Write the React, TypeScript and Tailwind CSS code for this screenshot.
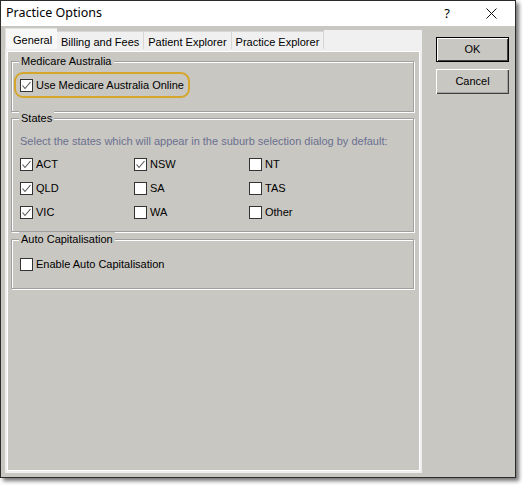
import { ReactNode } from 'react';

const font = { fontFamily: '"Liberation Sans", Arial, sans-serif' };

const Check = ({ checked, label }: { checked?: boolean; label?: string }) => (
  <div className="flex items-center h-[13px]">
    <span className="w-[13px] h-[13px] border border-[#333] bg-white flex items-center justify-center shrink-0">
      {checked && (
        <svg width="11" height="11" viewBox="0 0 11 11">
          <path d="M1.5 5.5 L4 8.5 L9.5 2" fill="none" stroke="#555" strokeWidth="1.1" />
        </svg>
      )}
    </span>
    {label && <span className="ml-[3px] text-[11px] text-black leading-none">{label}</span>}
  </div>
);

const Group = ({ title, className, children }: { title: string; className: string; children: ReactNode }) => (
  <div
    className={`relative border border-[#a0a0a0] shadow-[inset_1px_1px_0_#fff,1px_1px_0_#fff] ${className}`}
  >
    <span className="absolute left-[7px] -top-[8px] px-[2px] bg-[#c9c7c2] text-[11px] leading-[14px] text-black">
      {title}
    </span>
    {children}
  </div>
);

const tabs = ['Billing and Fees', 'Patient Explorer', 'Practice Explorer'];

const states: [string, boolean][] = [
  ['ACT', true],
  ['NSW', true],
  ['NT', false],
  ['QLD', true],
  ['SA', false],
  ['TAS', false],
  ['VIC', true],
  ['WA', false],
  ['Other', false],
];

export default function App() {
  return (
    <div className="w-[523px] h-[486px] bg-white" style={font}>
      <div className="w-[516px] h-[478px] border border-[#2b2b2b] shadow-[3px_3px_4px_rgba(0,0,0,0.55)] flex flex-col">
        {/* title bar */}
        <div className="h-[25px] bg-white flex items-center shrink-0">
          <span
            className="pl-[5px] text-[12.5px] text-black"
            style={{ fontFamily: '"Noto Sans", "Open Sans", sans-serif' }}
          >
            Practice Options
          </span>
          <span
            className="ml-auto text-[13px] text-black mr-[36px]"
            style={{ fontFamily: '"Noto Sans", sans-serif' }}
          >
            ?
          </span>
          <svg width="11" height="11" viewBox="0 0 11 11" className="mr-[18px]">
            <path d="M0.5 0.5 L10.5 10.5 M10.5 0.5 L0.5 10.5" stroke="#111" strokeWidth="1" />
          </svg>
        </div>

        {/* body */}
        <div className="flex-1 bg-[#c9c7c2] flex">
          <div className="ml-[4px] mt-[2px] w-[417px] h-[445px] flex flex-col">
            <div className="flex items-end h-[21px] text-[11px] text-black">
              <div className="h-[21px] w-[52px] bg-[#f7f7f7] border-t border-l border-[#e2e2e2] pl-[7px] pt-[3px]">
                General
              </div>
              {tabs.map((t) => (
                <div
                  key={t}
                  className="h-[18px] bg-[#f0f0f0] border-t border-r border-[#d6d6d6] px-[4px] pt-[2px] whitespace-nowrap"
                >
                  {t}
                </div>
              ))}
              <div className="flex-1 h-[19px] bg-[#f0f0f0]" />
            </div>

            <div className="flex-1 border-2 border-[#efefef] bg-[#f0f0f0]">
              <div className="h-full border border-white bg-[#c9c7c2] pl-[3px] pr-[5px] pt-[9px]">
                <Group title="Medicare Australia" className="h-[51px]">
                  <div className="pt-[10px] pl-[2px]">
                    <div className="inline-flex items-center h-[26px] border-2 border-[#d6a62a] rounded-[9px] pl-[4px] pr-[4px]">
                      <Check checked label="Use Medicare Australia Online" />
                    </div>
                  </div>
                </Group>

                <Group title="States" className="h-[114px] mt-[6px]">
                  <div className="pl-[8px] pt-[15px]">
                    <div className="text-[11px] leading-[14px] text-[#6a7090]">
                      Select the states which will appear in the suburb selection dialog by default:
                    </div>
                    <div className="grid grid-cols-[114px_115px_100px] gap-y-[11px] mt-[10px]">
                      {states.map(([s, c]) => (
                        <Check key={s} checked={c} label={s} />
                      ))}
                    </div>
                  </div>
                </Group>

                <Group title="Auto Capitalisation" className="h-[50px] mt-[7px]">
                  <div className="pl-[8px] pt-[18px]">
                    <Check label="Enable Auto Capitalisation" />
                  </div>
                </Group>
              </div>
            </div>
          </div>

          {/* buttons */}
          <div className="ml-[14px] mt-[11px] flex flex-col gap-[7px]">
            <button className="w-[73px] h-[25px] border border-black bg-[#c9c7c2] shadow-[inset_1px_1px_0_#fff,inset_-1px_-1px_0_#404040] text-[11px] text-black">
              OK
            </button>
            <button className="w-[73px] h-[25px] bg-[#c9c7c2] shadow-[inset_1px_1px_0_#fff,inset_-1px_-1px_0_#404040,inset_-2px_-2px_0_#a0a0a0] text-[11px] text-black">
              Cancel
            </button>
          </div>
        </div>
      </div>
    </div>
  );
}
